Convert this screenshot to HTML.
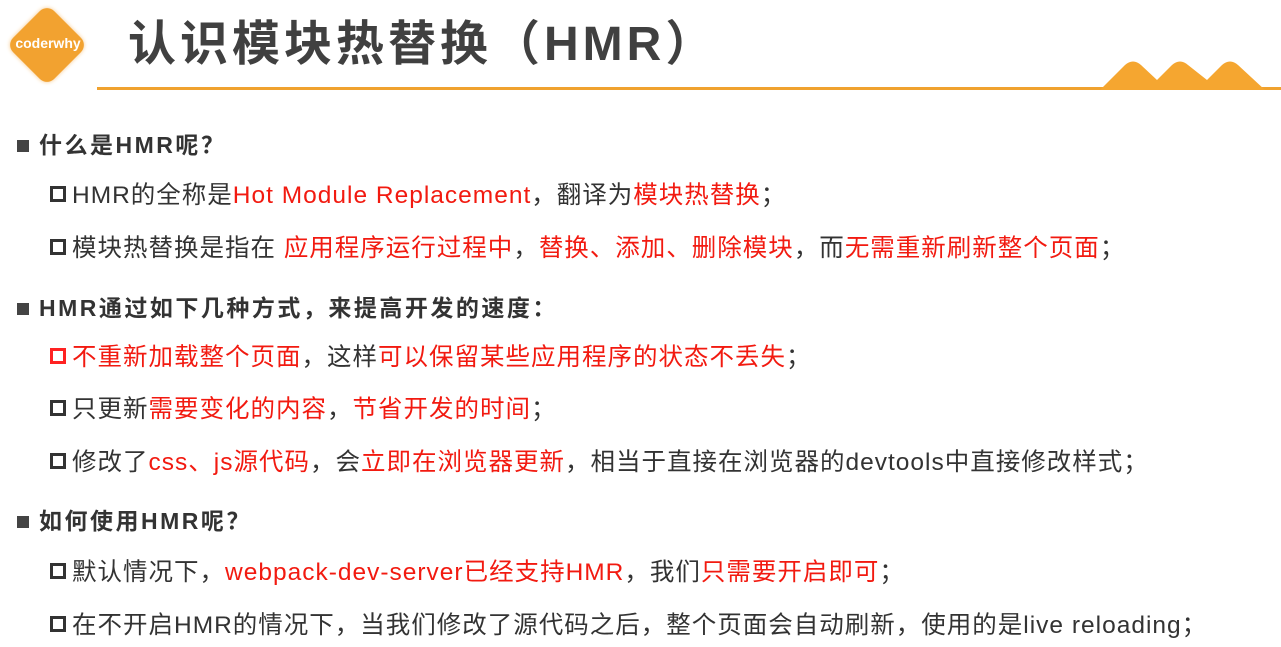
<!DOCTYPE html>
<html><head><meta charset="utf-8"><style>
body{margin:0;width:1281px;height:647px;background:#fff;overflow:hidden;position:relative;font-family:"Liberation Sans","Noto Sans CJK SC",sans-serif;color:#333}
.t{position:absolute;left:128px;top:12px;font-size:48px;font-weight:bold;color:#404040;letter-spacing:4px;line-height:66px;white-space:nowrap}
.line{position:absolute;left:97px;top:87px;width:1184px;height:3px;background:#f0a22e}
.l{position:absolute;white-space:nowrap;line-height:32px}
.a{left:17px;font-size:23px;font-weight:bold;color:#333;letter-spacing:2.5px}
.a:before{content:"";display:inline-block;width:12px;height:12px;background:#444;margin-right:10px;vertical-align:1px}
.b{left:50px;font-size:24.5px;color:#333;letter-spacing:1px}
.b:before{content:"";display:inline-block;width:10px;height:10px;border:3px solid #333;margin-right:6px;vertical-align:1px}
.b.rb:before{border-color:#f22}
.r{color:#f21a10}
</style></head><body>
<div style="position:absolute;left:18px;top:16px;width:58px;height:58px;background:#f2a230;border-radius:10px;transform:rotate(45deg);box-shadow:0 0 4px #f7c98a"></div>
<div style="position:absolute;left:6px;top:35px;width:84px;text-align:center;color:#fff;font-weight:bold;font-size:14px">coderwhy</div>
<div class="t">认识模块热替换（HMR）</div>
<div class="line"></div>
<svg style="position:absolute;left:1080px;top:40px" width="201" height="70"><path d="M20 50 L45 25 Q53 18 61 25 L77 40 L92 25 Q100 18 108 25 L127 40 L142 25 Q150 18 158 25 L185 50 Z" fill="#f5a630"/></svg>
<div class="l a" style="top:129px">什么是HMR呢？</div>
<div class="l b" style="top:180px">HMR的全称是<span class="r">Hot Module Replacement</span>，翻译为<span class="r">模块热替换</span>；</div>
<div class="l b" style="top:233px">模块热替换是指在 <span class="r">应用程序运行过程中</span>，<span class="r">替换、添加、删除模块</span>，而<span class="r">无需重新刷新整个页面</span>；</div>
<div class="l a" style="top:292px">HMR通过如下几种方式，来提高开发的速度：</div>
<div class="l b rb" style="top:342px"><span class="r">不重新加载整个页面</span>，这样<span class="r">可以保留某些应用程序的状态不丢失</span>；</div>
<div class="l b" style="top:394px">只更新<span class="r">需要变化的内容</span>，<span class="r">节省开发的时间</span>；</div>
<div class="l b" style="top:447px">修改了<span class="r">css、js源代码</span>，会<span class="r">立即在浏览器更新</span>，相当于直接在浏览器的devtools中直接修改样式；</div>
<div class="l a" style="top:505px">如何使用HMR呢？</div>
<div class="l b" style="top:557px">默认情况下，<span class="r">webpack-dev-server已经支持HMR</span>，我们<span class="r">只需要开启即可</span>；</div>
<div class="l b" style="top:610px">在不开启HMR的情况下，当我们修改了源代码之后，整个页面会自动刷新，使用的是live reloading；</div>
</body></html>
